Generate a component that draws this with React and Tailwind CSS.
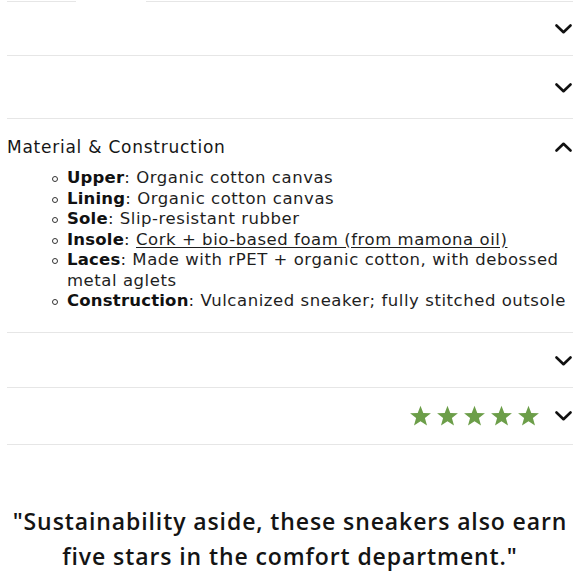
import React from "react";

const Chevron = ({ up = false }) => (
  <svg width="17" height="10" viewBox="0 0 17 10" className="shrink-0">
    <polyline
      points={up ? "1.5,8.5 8.5,1.8 15.5,8.5" : "1.5,1.5 8.5,8.2 15.5,1.5"}
      fill="none"
      stroke="#111"
      strokeWidth="2.6"
      strokeLinecap="round"
      strokeLinejoin="round"
    />
  </svg>
);

const Star = () => (
  <svg width="23" height="22" viewBox="0 0 24 23">
    <path
      d="M12 0.8 L14.9 8.3 L22.9 8.6 L16.6 13.6 L18.8 21.4 L12 16.9 L5.2 21.4 L7.4 13.6 L1.1 8.6 L9.1 8.3 Z"
      fill="#6c9e49"
    />
  </svg>
);

const items = [
  { k: "Upper", v: "Organic cotton canvas" },
  { k: "Lining", v: "Organic cotton canvas" },
  { k: "Sole", v: "Slip-resistant rubber" },
  { k: "Insole", v: "Cork + bio-based foam (from mamona oil)", u: true },
  { k: "Laces", v: "Made with rPET + organic cotton, with debossed metal aglets" },
  { k: "Construction", v: "Vulcanized sneaker; fully stitched outsole" },
];

export default function App() {
  return (
    <div
      className="w-[580px] h-[580px] bg-white overflow-hidden text-[#1b1b1b]"
      style={{ fontFamily: "'DejaVu Sans', 'Open Sans', Arial, sans-serif" }}
    >
      <div className="px-[7px] pt-[1px]">
        <div className="flex h-[1px]">
          <div className="w-[69px] bg-[#e6e6e6]" />
          <div className="w-[70px]" />
          <div className="flex-1 bg-[#e6e6e6]" />
        </div>
        <div className="h-[54px] flex items-center justify-end pr-[1px] pt-[1px] border-b border-[#e6e6e6]">
          <Chevron />
        </div>
        <div className="h-[63px] flex items-center justify-end pr-[1px] pt-[2px] border-b border-[#e6e6e6]">
          <Chevron />
        </div>
        <div className="h-[214px] border-b border-[#e6e6e6] pt-[17px]">
          <div className="flex items-center justify-between pr-[1px]">
            <span className="text-[17px] leading-[22px] tracking-[0.75px] text-[#161616]">
              Material &amp; Construction
            </span>
            <Chevron up />
          </div>
          <ul className="mt-[10px] pl-[45px] pr-[4px] text-[16.5px] leading-[20.5px] tracking-[0.55px] text-[#1e1e1e]">
            {items.map((it) => (
              <li key={it.k} className="flex">
                <span className="w-[15px] shrink-0 flex justify-start pt-[8px]">
                  <span className="block w-[6px] h-[6px] rounded-full border border-[#333]" />
                </span>
                <span>
                  <span className="font-bold tracking-[0.2px] text-[#111]">{it.k}</span>:{" "}
                  {it.u ? <span className="underline underline-offset-2">{it.v}</span> : it.v}
                </span>
              </li>
            ))}
          </ul>
        </div>
        <div className="h-[55px] flex items-center justify-end pr-[1px] pt-[2px] border-b border-[#e6e6e6]">
          <Chevron />
        </div>
        <div className="h-[57px] flex items-center justify-end pr-[1px] border-b border-[#e6e6e6]">
          <div className="flex items-center gap-[4px] mr-[15px]">
            <Star />
            <Star />
            <Star />
            <Star />
            <Star />
          </div>
          <Chevron />
        </div>
      </div>
      <div
        className="mt-[59px] px-[2px] text-center text-[23px] leading-[35px] font-semibold tracking-[0.9px] text-[#141414]"
        style={{ fontFamily: "'Open Sans', 'DejaVu Sans', sans-serif" }}
      >
        "Sustainability aside, these sneakers also earn
        <br />
        five stars in the comfort department."
      </div>
    </div>
  );
}
